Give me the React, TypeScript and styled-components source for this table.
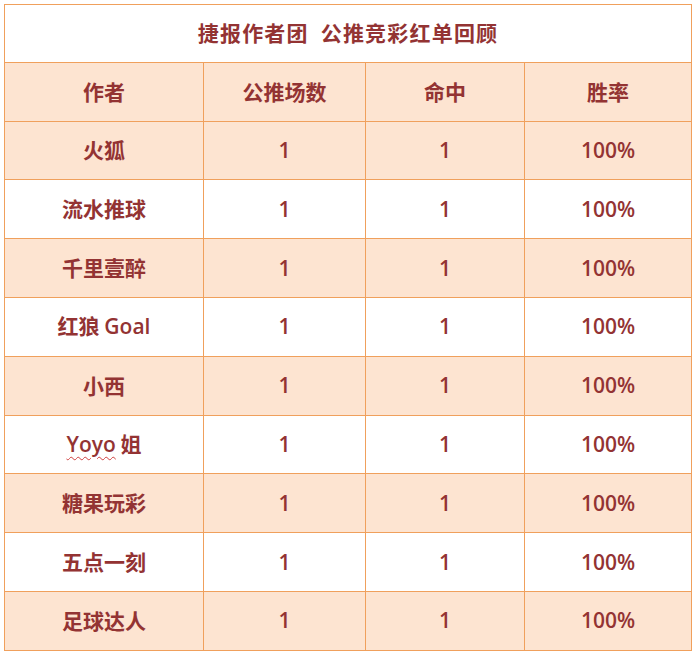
import React from "react";
import styled, { createGlobalStyle } from "styled-components";

const Global = createGlobalStyle`
  html, body { margin: 0; padding: 0; background: #ffffff; }
  body { font-family: "Noto Sans CJK SC", "Noto Sans", sans-serif; }
`;

const Page = styled.div`
  padding: 4px 0 0 4px;
`;

const Table = styled.table`
  border-collapse: collapse;
  table-layout: fixed;
  width: 687px;
  color: #933333;
  font-family: "Noto Sans CJK SC", "Noto Sans", sans-serif;
  font-weight: 700;
  font-size: 21px;
`;

const Cell = styled.td<{ $peach?: boolean }>`
  border: 1px solid #f0a05c;
  background: ${(p) => (p.$peach ? "#fde4d1" : "#ffffff")};
  text-align: center;
  vertical-align: middle;
  padding: 0 0 2px 0;
  height: 55.8px;
  line-height: 24px;
`;

const TitleCell = styled(Cell)`
  height: 54.8px;
  letter-spacing: 1.2px;
`;

const Num = styled.span`
  font-family: "Open Sans", "Noto Sans", sans-serif;
  font-weight: 600;
  font-size: 21px;
`;

const Latin = styled.span`
  font-family: "Open Sans", "Noto Sans", sans-serif;
  font-weight: 600;
`;

const Wavy = styled(Latin)`
  text-decoration: underline wavy #d04040;
  text-decoration-thickness: 1px;
  text-underline-offset: 4px;
`;

type Row = { name: React.ReactNode };

const rows: Row[] = [
  { name: "火狐" },
  { name: "流水推球" },
  { name: "千里壹醉" },
  { name: <>红狼 <Latin>Goal</Latin></> },
  { name: "小西" },
  { name: <><Wavy>Yoyo</Wavy> 姐</> },
  { name: "糖果玩彩" },
  { name: "五点一刻" },
  { name: "足球达人" },
];

export default function App() {
  return (
    <>
      <Global />
      <Page>
        <Table>
          <colgroup>
            <col style={{ width: 199 }} />
            <col style={{ width: 162 }} />
            <col style={{ width: 159 }} />
            <col style={{ width: 167 }} />
          </colgroup>
          <tbody>
            <tr>
              <TitleCell colSpan={4}>捷报作者团&nbsp;&nbsp;公推竞彩红单回顾</TitleCell>
            </tr>
            <tr>
              <Cell $peach>作者</Cell>
              <Cell $peach>公推场数</Cell>
              <Cell $peach>命中</Cell>
              <Cell $peach>胜率</Cell>
            </tr>
            {rows.map((r, i) => (
              <tr key={i}>
                <Cell $peach={i % 2 === 0}>{r.name}</Cell>
                <Cell $peach={i % 2 === 0}><Num>1</Num></Cell>
                <Cell $peach={i % 2 === 0}><Num>1</Num></Cell>
                <Cell $peach={i % 2 === 0}><Num>100%</Num></Cell>
              </tr>
            ))}
          </tbody>
        </Table>
      </Page>
    </>
  );
}
